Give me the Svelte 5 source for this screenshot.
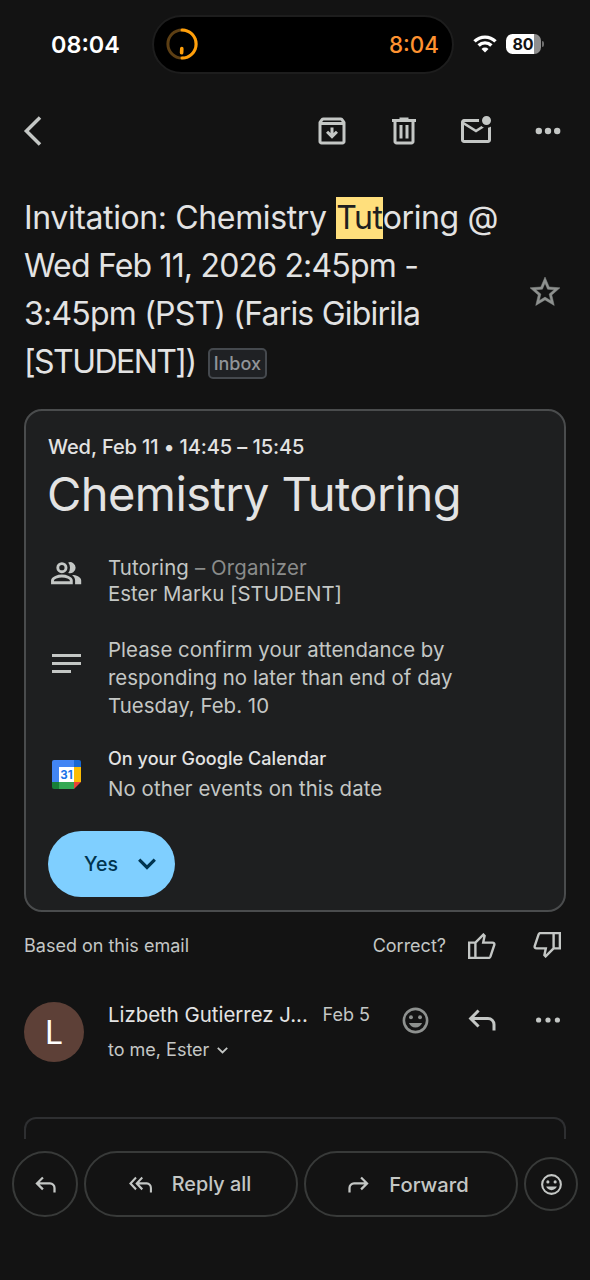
<script lang="ts">
	let time = '08:04';
	let battery = 80;
	let sender = 'Lizbeth Gutierrez J...';

	const replyPath =
		'M19 19v-4q0-1.25-.875-2.125T16 12H6.825l3.6 3.6L9 17l-6-6 6-6 1.425 1.4-3.6 3.6H16q2.075 0 3.538 1.463Q21 12.925 21 15v4Z';
	const thumbPath =
		'M1.1 9.6h6.3v15.3H1.1zM7.4 9.6L15.4 1.6l1.2 1.2-1.4 6.8h9.2q2.3 0 1.9 2.4L22.4 23.6q-.5 1.3-1.8 1.3H7.4';
</script>

{#snippet mood(size)}
	<svg width={size} height={size} viewBox="0 0 24 24" fill="currentColor">
		<circle cx="12" cy="12" r="9" fill="none" stroke="currentColor" stroke-width="2" />
		<circle cx="8.5" cy="9.5" r="1.5" />
		<circle cx="15.5" cy="9.5" r="1.5" />
		<path d="M6.9 14h10.2c-.8 2-2.7 3.5-5.1 3.5S7.7 16 6.9 14z" />
	</svg>
{/snippet}

{#snippet dots(r, gap)}
	<svg width="36" height="36" viewBox="0 0 36 36" fill="currentColor">
		<circle cx={18 - gap} cy="18" {r} />
		<circle cx="18" cy="18" {r} />
		<circle cx={18 + gap} cy="18" {r} />
	</svg>
{/snippet}

<div class="screen">
	<header class="status">
		<span class="clock">{time}</span>
		<div class="island">
			<svg width="32" height="32" viewBox="0 0 32 32" fill="none" stroke-width="3">
				<circle cx="16" cy="16" r="14.1" stroke="#5d3f14" />
				<path d="M16 1.9a14.1 14.1 0 0 1 0 28.2" stroke="#ff9f0a" stroke-linecap="round" />
				<path d="M15.8 20.6l-.2 4.2" stroke="#ff9f0a" stroke-width="3.6" stroke-linecap="round" />
			</svg>
			<span>8:04</span>
		</div>
		<svg class="wifi" width="24" height="18" viewBox="0 0 24 18" fill="none" stroke="#fff" stroke-width="3.4">
			<path d="M1.5 6.4a15 15 0 0 1 21 0" />
			<path d="M5.6 10.5a9.2 9.2 0 0 1 12.8 0" />
			<path d="M12 17.6l-3.5-3.7a5 5 0 0 1 7 0z" fill="#fff" stroke="none" />
		</svg>
		<div class="battery">{battery}</div>
		<span class="cap"></span>
	</header>

	<nav class="toolbar">
		<svg class="back" width="20" height="32" viewBox="0 0 20 32" fill="none" stroke="currentColor" stroke-width="3.5">
			<path d="M18 2.4L4.4 16 18 29.6" />
		</svg>
		<svg width="36" height="36" viewBox="0 0 24 24" fill="currentColor">
			<path d="M12 17.2l4-4-1.4-1.4-1.6 1.6V9.6h-2v3.8l-1.6-1.6L8 13.2l4 4ZM5 8v11h14V8ZM5 21q-.825 0-1.412-.587Q3 19.825 3 19V6.525q0-.35.113-.675.112-.325.337-.6L4.7 3.725q.275-.35.687-.538Q5.8 3 6.25 3h11.5q.45 0 .863.187.412.188.687.538l1.25 1.525q.225.275.338.6.112.325.112.675V19q0 .825-.587 1.413Q19.825 21 19 21Zm.4-15h13.2l-.85-1H6.25Z" />
		</svg>
		<svg width="36" height="36" viewBox="0 0 24 24" fill="currentColor">
			<path d="M7 21q-.825 0-1.412-.587Q5 19.825 5 19V6H4V4h5V3h6v1h5v2h-1v13q0 .825-.587 1.413Q17.825 21 17 21ZM17 6H7v13h10ZM9 17h2V8H9Zm4 0h2V8h-2Z" />
		</svg>
		<svg width="36" height="36" viewBox="0 0 24 24" fill="currentColor">
			<path d="M4 20q-.825 0-1.412-.587Q2 18.825 2 18V6q0-.825.588-1.412Q3.175 4 4 4h10.1q-.1.5-.1 1t.1 1H4l8 5 3.65-2.275q.35.325.763.562.412.238.862.413L12 13 4 8v10h16V9.9q.575-.125 1.075-.35.5-.225.925-.55v9q0 .825-.587 1.413Q20.825 20 20 20ZM19 8q-1.25 0-2.125-.875T16 5q0-1.25.875-2.125T19 2q1.25 0 2.125.875T22 5q0 1.25-.875 2.125T19 8Z" />
		</svg>
		{@render dots(3.2, 9.2)}
	</nav>

	<div class="subject">
		<h1>
			<span class="line">Invitation: Chemistry <mark>Tut</mark>oring @</span>
			<span class="line">Wed Feb 11, 2026 2:45pm -</span>
			<span class="line">3:45pm (PST) (Faris Gibirila</span>
			<span class="line">[STUDENT])<span class="label">Inbox</span></span>
		</h1>
		<svg class="star" width="36" height="36" viewBox="0 0 24 24" fill="currentColor">
			<path d="M22 9.24l-7.19-.62L12 2 9.19 8.63 2 9.24l5.46 4.73L5.82 21 12 17.27 18.18 21l-1.63-7.03L22 9.24zM12 15.4l-3.76 2.27 1-4.28-3.32-2.88 4.38-.38L12 6.1l1.71 4.04 4.38.38-3.32 2.88 1 4.28L12 15.4z" stroke="currentColor" stroke-width="0.3" />
		</svg>
	</div>

	<section class="event">
		<div class="date">Wed, Feb 11 • 14:45 – 15:45</div>
		<h2>Chemistry Tutoring</h2>
		<div class="row people">
			<svg width="31" height="23" viewBox="0 0 31 23" fill="currentColor">
				<circle cx="10.9" cy="5.7" r="4.1" fill="none" stroke="currentColor" stroke-width="2.9" />
				<path d="M1.5 20.8v-2.2c0-2.9 5.6-4.6 9.4-4.6s9.4 1.7 9.4 4.6v2.2z" fill="none" stroke="currentColor" stroke-width="2.9" />
				<path d="M17.2.4a5.6 5.6 0 1 1 0 10.6q1.8-2.2 1.8-5.3T17.2.4z" />
				<path d="M22.6 12.9c4.4.7 7.6 2.6 7.6 5.7v3.7h-6.1v-3.7q0-3.4-3.1-5.4z" />
			</svg>
			<div>
				<div class="organizer">Tutoring <span class="dim">– Organizer</span></div>
				<div>Ester Marku [STUDENT]</div>
			</div>
		</div>
		<div class="row note">
			<svg width="29" height="20" viewBox="0 0 29 20" fill="currentColor">
				<path d="M0 0h29v3H0zM0 8h29v3H0zM0 16h19v3H0z" />
			</svg>
			<div>
				Please confirm your attendance by<br />
				responding no later than end of day<br />
				Tuesday, Feb. 10
			</div>
		</div>
		<div class="row calendar">
			<div class="gcal">
				<svg width="29" height="29" viewBox="0 0 29 29">
					<path d="M2 0h20v7H7v15H0V2q0-2 2-2z" fill="#4285f4" />
					<path d="M22 0h5q2 0 2 2v5h-7z" fill="#1967d2" />
					<path d="M22 7h7v15h-7z" fill="#fbbc04" />
					<path d="M7 22h15v7H7z" fill="#34a853" />
					<path d="M0 22h7v7H2q-2 0-2-2z" fill="#188038" />
					<path d="M22 22h7l-7 7z" fill="#ea4335" />
					<path d="M7 7h15v15H7z" fill="#fff" />
				</svg>
				<span>31</span>
			</div>
			<div>
				<div class="strong">On your Google Calendar</div>
				<div class="free">No other events on this date</div>
			</div>
		</div>
		<button class="yes">
			Yes
			<svg width="18" height="12" viewBox="0 0 18 12" fill="none" stroke="currentColor" stroke-width="3.2">
				<path d="M1.2 1.6L9 9.4l7.8-7.8" />
			</svg>
		</button>
	</section>

	<div class="feedback">
		<span>Based on this email</span>
		<span class="ask">Correct?</span>
		<svg class="up" width="28" height="26" viewBox="0 0 28 26" fill="none" stroke="currentColor" stroke-width="2.4">
			<path d={thumbPath} />
		</svg>
		<svg class="down" width="28" height="26" viewBox="0 0 28 26" fill="none" stroke="currentColor" stroke-width="2.4">
			<path d={thumbPath} />
		</svg>
	</div>

	<div class="message">
		<div class="avatar">L</div>
		<div class="who">
			<div class="from"><span class="name">{sender}</span><span class="day">Feb 5</span></div>
			<div class="to">
				to me, Ester
				<svg width="11" height="7" viewBox="0 0 11 7" fill="none" stroke="currentColor" stroke-width="1.8">
					<path d="M.8 .8l4.7 4.7L10.2 .8" />
				</svg>
			</div>
		</div>
		<div class="actions">
			<span class="react">{@render mood(31)}</span>
			<svg width="36" height="36" viewBox="0 0 24 24" fill="currentColor"><path d={replyPath} /></svg>
			{@render dots(2.6, 9.4)}
		</div>
	</div>

	<div class="body-card"></div>

	<footer>
		<button class="round">
			<svg width="27" height="27" viewBox="0 0 24 24" fill="currentColor"><path d={replyPath} /></svg>
		</button>
		<button class="pill">
			<svg width="25" height="27" viewBox="0 0 24 24" preserveAspectRatio="none" fill="currentColor">
				<path d="M7 17l-6-6 6-6 1.4 1.4L3.8 11l4.6 4.6Zm14 2v-4q0-1.25-.875-2.125T18 12h-7.2l3.6 3.6L13 17l-6-6 6-6 1.4 1.4-3.6 3.6H18q2.075 0 3.538 1.463Q23 12.925 23 15v4Z" />
			</svg>
			<span>Reply all</span>
		</button>
		<button class="pill forward">
			<svg class="flip" width="27" height="27" viewBox="0 0 24 24" fill="currentColor"><path d={replyPath} /></svg>
			<span>Forward</span>
		</button>
		<button class="round small">{@render mood(25)}</button>
	</footer>
</div>

<style>
	:global(body) {
		background: #131313;
	}
	.screen {
		width: 590px;
		height: 1280px;
		overflow: hidden;
		background: #131313;
		color: #c4c7c5;
		font-family: 'Inter', 'Liberation Sans', sans-serif;
		font-size: 18px;
	}
	svg {
		display: block;
		flex: none;
	}
	button {
		display: flex;
		align-items: center;
		justify-content: center;
		box-sizing: border-box;
		padding: 0;
		background: none;
		color: inherit;
		font: 500 20px 'Inter', sans-serif;
	}

	.status {
		display: flex;
		align-items: center;
		height: 88px;
		color: #fff;
	}
	.clock {
		width: 101px;
		padding-left: 51px;
		font-size: 23.4px;
		font-weight: 600;
	}
	.island {
		display: flex;
		align-items: center;
		justify-content: space-between;
		box-sizing: border-box;
		width: 302px;
		height: 59px;
		padding: 0 13px 0 12px;
		border: 2px solid #1d1d1d;
		border-radius: 30px;
		background: #000;
		color: #ff9230;
		font-size: 22.4px;
		font-weight: 500;
	}
	.wifi {
		margin-left: 19px;
	}
	.battery {
		box-sizing: border-box;
		width: 35px;
		height: 20px;
		margin-left: 9px;
		padding-right: 1px;
		border-radius: 6.5px;
		background: linear-gradient(90deg, #fff 28px, #8e8e8e 28px);
		color: #131313;
		font-size: 16px;
		font-weight: 700;
		line-height: 20px;
		text-align: center;
	}
	.cap {
		width: 2px;
		height: 6px;
		margin-left: 1px;
		border-radius: 0 3px 3px 0;
		background: #6e6e6e;
	}

	.toolbar {
		display: flex;
		align-items: center;
		gap: 36px;
		height: 86px;
		padding: 0 24px 0 22px;
	}
	.back {
		margin-right: auto;
	}

	.subject {
		display: flex;
		justify-content: space-between;
		margin-top: 20px;
		padding: 0 27px 0 24px;
	}
	h1 {
		margin: 0;
		color: #e3e3e3;
		font-size: 32px;
		font-weight: 400;
		line-height: 48px;
	}
	.line {
		display: flex;
		align-items: center;
		height: 48px;
		white-space: pre;
		letter-spacing: -0.38px;
	}
	.line:nth-child(2) {
		letter-spacing: -0.82px;
	}
	.line:nth-child(3) {
		letter-spacing: -0.8px;
	}
	.line:nth-child(4) {
		letter-spacing: -1.55px;
	}
	mark {
		height: 42px;
		margin-left: 1px;
		background: #ffdf7c;
		color: #1f1f1f;
		line-height: 42px;
	}
	.label {
		box-sizing: border-box;
		height: 31px;
		margin: 2px 0 0 12px;
		padding: 0 4px;
		border: 2px solid #45494e;
		border-radius: 5px;
		background: #1f2124;
		color: #909498;
		font-size: 18px;
		font-weight: 500;
		letter-spacing: 0;
		line-height: 27px;
	}
	.star {
		margin-top: 80px;
		color: #8e918f;
	}

	.event {
		box-sizing: border-box;
		width: 542px;
		height: 503px;
		margin: 23px 0 0 24px;
		padding: 22px 22px 0;
		border: 2px solid #4a4c4d;
		border-radius: 18px;
		background: #1e1f20;
	}
	.date {
		color: #e3e3e3;
		font-size: 20px;
		font-weight: 500;
		letter-spacing: -0.09px;
		line-height: 28px;
	}
	h2 {
		margin: 5px 0 0 -1px;
		color: #e3e3e3;
		font-size: 47px;
		font-weight: 400;
		letter-spacing: -0.58px;
		line-height: 56px;
	}
	.row {
		display: grid;
		grid-template-columns: 60px 1fr;
		font-size: 20.4px;
		letter-spacing: 0.03px;
		white-space: nowrap;
	}
	.people {
		margin-top: 33px;
		line-height: 26px;
	}
	.people svg {
		margin: 7px 0 0 3px;
	}
	.organizer {
		letter-spacing: 0.14px;
	}
	.dim {
		color: #8a8c8b;
	}
	.note {
		margin-top: 29px;
		line-height: 28px;
	}
	.note svg {
		margin: 18px 0 0 4px;
	}
	.calendar {
		margin-top: 24px;
		line-height: 30px;
	}
	.gcal {
		position: relative;
		width: 29px;
		height: 29px;
		margin: 16px 0 0 4px;
	}
	.gcal span {
		position: absolute;
		inset: 0;
		color: #1a73e8;
		font-size: 11.5px;
		font-weight: 700;
		letter-spacing: 0;
		line-height: 30px;
		text-align: center;
	}
	.strong {
		color: #e3e3e3;
		font-size: 18px;
		font-weight: 500;
		letter-spacing: 0.06px;
	}
	.free {
		letter-spacing: 0.1px;
	}
	.yes {
		gap: 20px;
		width: 127px;
		height: 66px;
		margin-top: 27px;
		padding-left: 17px;
		border: none;
		border-radius: 33px;
		background: #7fcfff;
		color: #00344f;
		font-size: 19.5px;
	}

	.feedback {
		display: flex;
		align-items: center;
		height: 67px;
		padding: 0 28px 0 24px;
	}
	.ask {
		margin-left: auto;
	}
	.up {
		margin-left: 22px;
	}
	.down {
		margin: -2px 1px 0 37px;
		transform: rotate(180deg);
	}

	.message {
		display: flex;
		height: 60px;
		margin-top: 23px;
		padding: 0 24px;
	}
	.avatar {
		width: 60px;
		border-radius: 50%;
		background: #5d4037;
		color: #fff;
		font-size: 32px;
		line-height: 61px;
		text-align: center;
	}
	.who {
		width: 262px;
		margin-left: 24px;
	}
	.from {
		display: flex;
		justify-content: space-between;
		line-height: 26px;
	}
	.name {
		color: #e3e3e3;
		font-size: 20.4px;
	}
	.to {
		display: flex;
		align-items: center;
		gap: 8px;
		margin-top: 9px;
		line-height: 26px;
	}
	.actions {
		display: flex;
		align-items: center;
		gap: 30px;
		height: 36px;
		margin-left: 30px;
	}
	.actions > svg:nth-child(2) {
		margin-left: 3px;
	}
	.react {
		color: #8e918f;
	}

	.body-card {
		box-sizing: border-box;
		width: 542px;
		height: 22px;
		margin: 55px 0 0 24px;
		border: 2px solid #2e2f31;
		border-bottom: none;
		border-radius: 12px 12px 0 0;
	}

	footer {
		display: flex;
		align-items: center;
		justify-content: space-between;
		padding: 12px 12px 0;
	}
	.round,
	.pill {
		height: 66px;
		border: 2px solid #383a39;
		border-radius: 33px;
	}
	.round {
		width: 66px;
	}
	.small {
		width: 54px;
		height: 54px;
	}
	.pill {
		gap: 19px;
		width: 214px;
		padding-right: 3px;
		font-size: 19.8px;
	}
	.forward {
		gap: 17px;
		padding-right: 8px;
		font-size: 20.2px;
	}
	.flip {
		transform: scaleX(-1);
	}
</style>
